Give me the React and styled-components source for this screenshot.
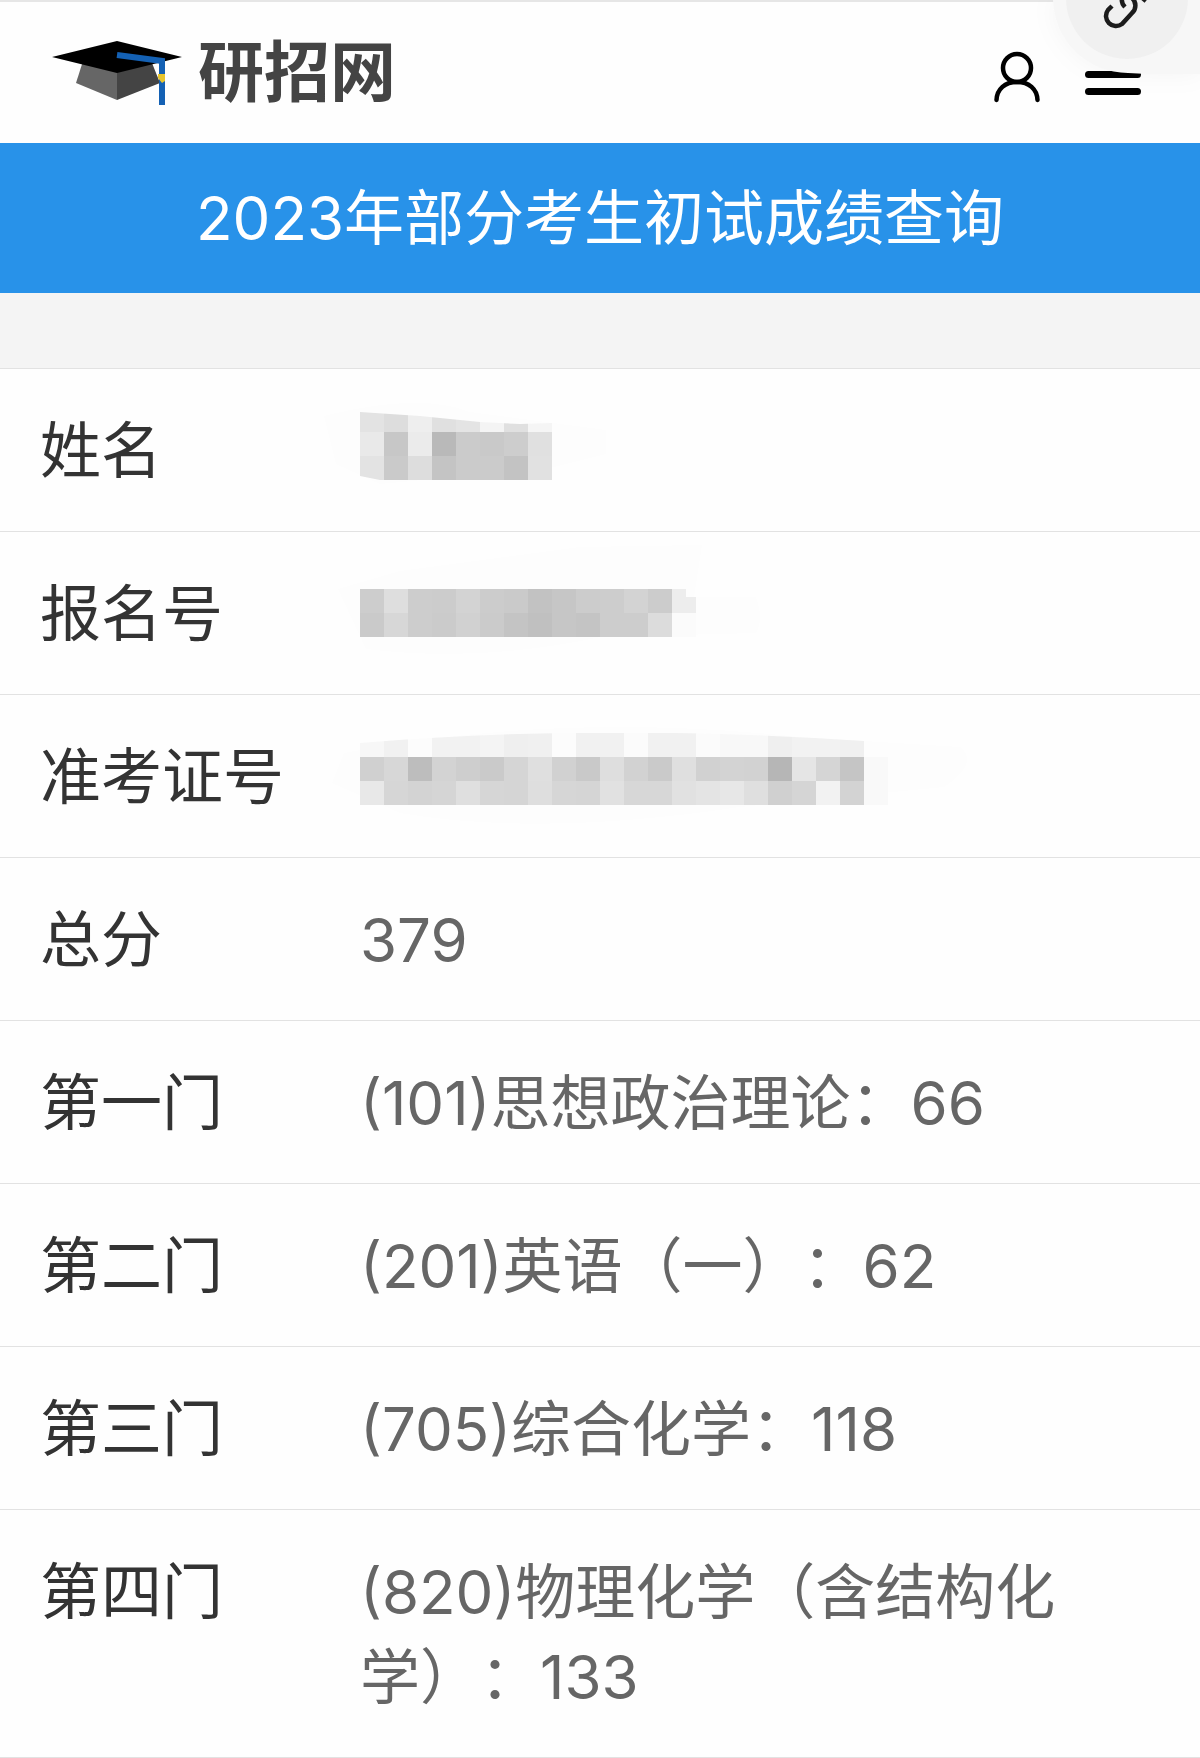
import React from 'react';
import styled, { createGlobalStyle } from 'styled-components';

const GlobalStyle = createGlobalStyle`
  * {
    box-sizing: border-box;
  }

  body {
    margin: 0;
    background: #fefefe;
    color: #333;
    font-family: Inter, "Noto Sans CJK SC", sans-serif;
    font-size: 60px;
    line-height: 85px;
    text-spacing-trim: space-all;
  }
`;

const Header = styled.header`
  display: flex;
  align-items: center;
  justify-content: space-between;
  height: 143px;
  padding: 0 59px 0 52px;
  border-top: 2px solid #e6e6e6;
`;

const Brand = styled.a`
  display: flex;
  align-items: center;
  gap: 16px;
  color: #444;
  text-decoration: none;
`;

const BrandName = styled.span`
  padding-bottom: 12px;
  font-family: "Noto Sans CJK SC", sans-serif;
  font-size: 66px;
  font-weight: 700;
  line-height: 66px;
`;

const Actions = styled.nav`
  display: flex;
  align-items: center;
  gap: 45px;
`;

const IconButton = styled.button`
  display: flex;
  padding: 8px 0 0;
  border: 0;
  background: none;
  color: #000;
`;

const FloatingLink = styled.button`
  position: absolute;
  top: 0;
  right: 0;
  display: flex;
  padding: 0;
  border: 0;
  background: none;
  filter: drop-shadow(0 0 12px rgba(0, 0, 0, 0.04));
`;

const Title = styled.h1`
  margin: 0;
  padding: 33px 20px 32px;
  background: #2892e9;
  color: #fff;
  font-size: 60px;
  font-weight: 400;
  text-align: center;
`;

const Results = styled.table`
  width: 100%;
  margin-top: 75px;
  border-collapse: separate;
  border-spacing: 0;
  border-bottom: 1px solid #e2e2e2;
  background: #fefefe;
`;

const Page = styled.main`
  background: #f4f4f4;
`;

const Label = styled.th`
  width: 30%;
  padding: 40px 0 37px 40px;
  border-top: 1px solid #e2e2e2;
  font-size: 61px;
  font-weight: 400;
  text-align: left;
  vertical-align: top;
`;

const Value = styled.td`
  padding: 40px 40px 37px 0;
  border-top: 1px solid #e2e2e2;
  color: #666;
  vertical-align: top;
`;

const Mosaic = styled.svg`
  display: block;
  overflow: visible;
`;

const CELL = 24;

// each row is a list of two-digit grey levels, one per cell
const masks = {
  name: {
    top: -1,
    rows: [
      'e3 dd ee e0 e4 f4 e0 f5',
      'e9 c7 eb b9 cb c9 cd e0',
      'e3 ca dd c4 cb cb c3 e1',
    ],
    clip: 'M0 4L60 8L120 14L160 16L192 15V72H20L0 68Z',
    smudge: 'M-36 8Q60 -16 110 4L246 22V46L190 60L20 76L-24 56Z',
  },
  number: {
    top: 17,
    rows: [
      'cd de cd cc d3 cc ca c2 c6 cc cd d3 cc ed',
      'ca d7 cd cb d1 cb c4 c0 c6 c4 cd cd dc fb',
    ],
    clip: 'M0 0H326V8H336V48H0Z',
    smudge: 'M-22 0L40 -18L220 -42L342 -44L334 8H396Q404 30 396 44L240 48Q120 74 6 60L-8 30Z',
  },
  ticket: {
    top: -2,
    rows: [
      'f7 f1 fc f2 f2 f4 ef f0 fc f1 f1 fb f1 f1 fb f8 f8 ef f2 f2 f0',
      'd0 d7 bd d3 ce ca d5 df d1 c9 de d2 ca df d1 d3 d2 b6 e5 d5 c5 f9',
      'e8 d6 d3 d5 df d6 d5 de d6 d5 e1 d7 d7 e1 e4 e7 df d0 d5 f2 d3 f9',
    ],
    clip: 'M0 10Q240 -10 504 8V24H528V72H0Z',
    smudge: 'M-16 20Q200 -22 440 4L600 14Q620 30 584 54L380 74Q180 104 40 80L-28 50Z',
  },
};

const rows = [
  { label: '姓名', mask: 'name' },
  { label: '报名号', mask: 'number' },
  { label: '准考证号', mask: 'ticket' },
  { label: '总分', value: '379' },
  { label: '第一门', value: '(101)思想政治理论：66' },
  { label: '第二门', value: '(201)英语（一）：62' },
  { label: '第三门', value: '(705)综合化学：118' },
  { label: '第四门', value: '(820)物理化学（含结构化学）：133' },
];

const CapLogo = () => (
  <svg width="130" height="66" viewBox="0 0 130 66" aria-hidden="true">
    <path d="M31 21L24 43L65 60V31Z" fill="#666" />
    <path d="M65 31V60L108 43L100 23Z" fill="#444" />
    <path d="M0 17L65 1L130 17L65 33Z" fill="#000" />
    <path d="M65 15L110 21V65" fill="none" stroke="#1461b4" strokeWidth="6" />
    <path d="M106 34H113V41L110 43L106 38Z" fill="#e8c52e" />
  </svg>
);

const UserIcon = () => (
  <svg width="46" height="52" viewBox="0 0 46 52" fill="none" stroke="currentColor" strokeWidth="4.5" strokeLinecap="round">
    <circle cx="23" cy="17" r="14" />
    <path d="M2.5 49C3 38 11 31 23 31S43 38 43.5 49" />
  </svg>
);

const MenuIcon = () => (
  <svg width="56" height="52" viewBox="0 0 56 52" fill="currentColor">
    <rect y="20" width="56" height="7" rx="3.5" />
    <rect y="37" width="56" height="7" rx="3.5" />
  </svg>
);

const LinkBubble = () => (
  <svg width="148" height="74" viewBox="0 0 148 74">
    <path d="M1 0A75 75 0 0 0 76 73L96 74H148V0Z" fill="#f7f7f7" />
    <circle cx="75" cy="-2" r="61" fill="#f0f0f0" />
    <g fill="none" stroke="#1c1c1c" strokeWidth="4.5">
      <path d="M60 6L56 10A10 10 0 0 0 70 24L80 13A10 10 0 0 0 80 -2" />
      <path d="M70 -2Q69 3 73 7" />
      <path d="M88 -4L94 1" />
    </g>
  </svg>
);

const MaskedValue = ({ id }) => {
  const { top, rows: cells, clip, smudge } = masks[id];
  return (
    <Mosaic width="528" height="85" viewBox="0 0 528 85" role="img" aria-label="已隐藏">
      <clipPath id={`clip-${id}`}>
        <path d={clip} />
      </clipPath>
      <g transform={`translate(0 ${top})`} shapeRendering="crispEdges">
        <path d={smudge} fill="#fdfdfd" />
        <g clipPath={`url(#clip-${id})`}>
          {cells.map((line, y) =>
            line.split(' ').map((grey, x) => (
              <rect
                key={`${x}-${y}`}
                x={x * CELL}
                y={y * CELL}
                width={CELL}
                height={CELL}
                fill={`#${grey.repeat(3)}`}
              />
            ))
          )}
        </g>
      </g>
    </Mosaic>
  );
};

const App = () => (
  <>
    <GlobalStyle />
    <Header>
      <Brand href="#">
        <CapLogo />
        <BrandName>研招网</BrandName>
      </Brand>
      <Actions>
        <IconButton aria-label="用户">
          <UserIcon />
        </IconButton>
        <IconButton aria-label="菜单">
          <MenuIcon />
        </IconButton>
      </Actions>
      <FloatingLink aria-label="复制链接">
        <LinkBubble />
      </FloatingLink>
    </Header>
    <Page>
      <Title>2023年部分考生初试成绩查询</Title>
      <Results>
        <tbody>
          {rows.map(row => (
            <tr key={row.label}>
              <Label scope="row">{row.label}</Label>
              <Value>{row.mask ? <MaskedValue id={row.mask} /> : row.value}</Value>
            </tr>
          ))}
        </tbody>
      </Results>
    </Page>
  </>
);

export default App;
